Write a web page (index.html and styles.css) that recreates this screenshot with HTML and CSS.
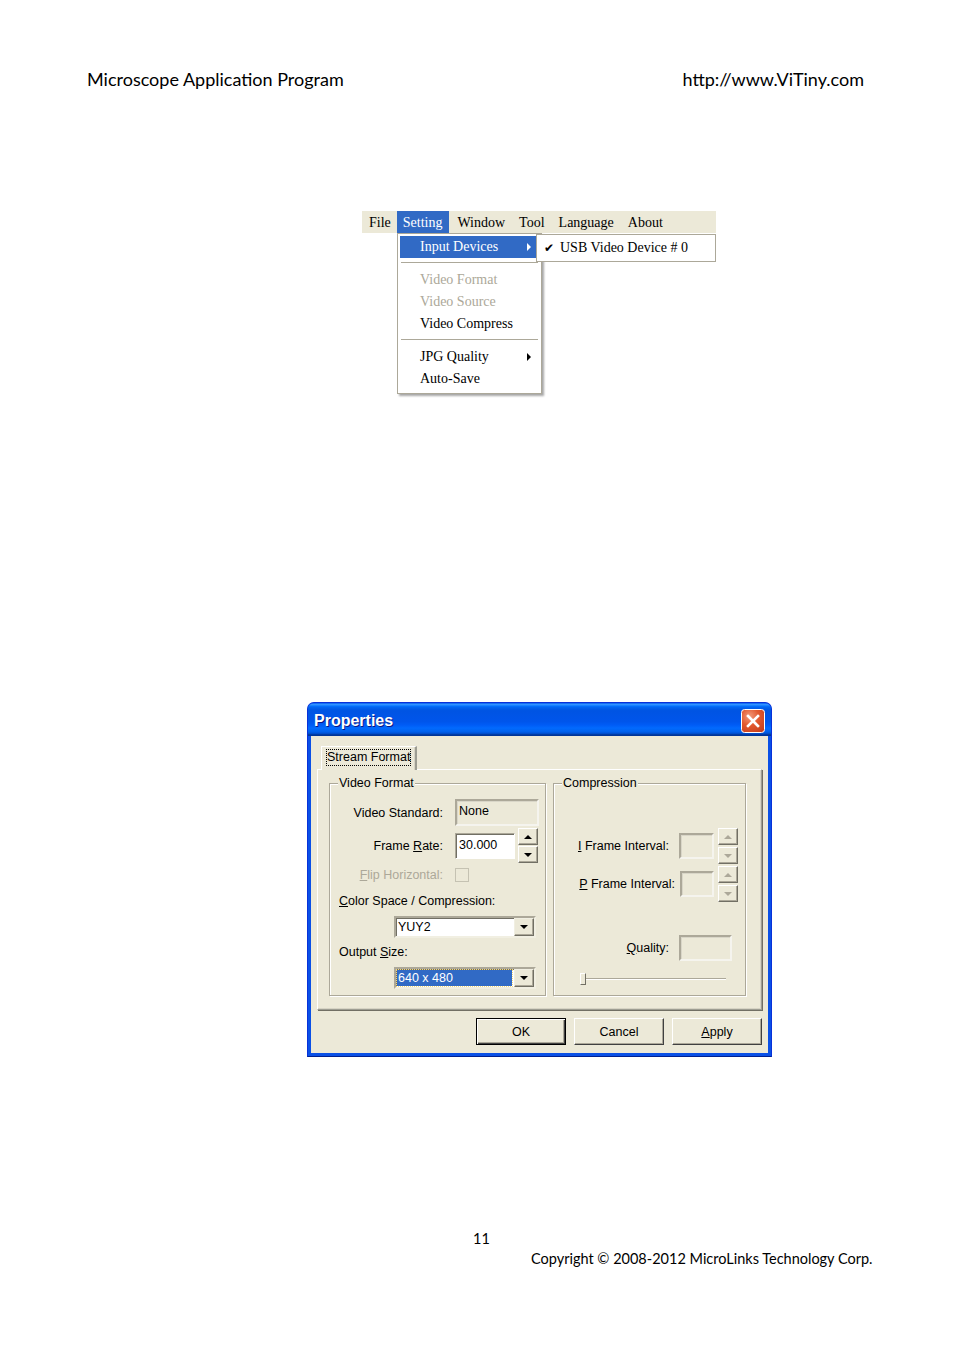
FILE: index.html
```html
<!DOCTYPE html>
<html>
<head>
<meta charset="utf-8">
<title>Microscope Application Program</title>
<link rel="stylesheet" href="styles.css">
</head>
<body>
<header class="doc-head">
  <span>Microscope Application Program</span>
  <span>http://www.ViTiny.com</span>
</header>

<div class="menu-shot">
  <div class="menubar">
    <span class="mb-item">File</span><span class="mb-item active">Setting</span><span class="mb-item">Window</span><span class="mb-item">Tool</span><span class="mb-item">Language</span><span class="mb-item">About</span>
  </div>
  <div class="menu-drops">
    <div class="dropdown">
      <div class="mi hl"><span>Input Devices</span><span class="arrow"></span></div>
      <div class="sep"></div>
      <div class="mi dis"><span>Video Format</span></div>
      <div class="mi dis"><span>Video Source</span></div>
      <div class="mi"><span>Video Compress</span></div>
      <div class="sep"></div>
      <div class="mi"><span>JPG Quality</span><span class="arrow dark"></span></div>
      <div class="mi"><span>Auto-Save</span></div>
    </div>
    <div class="submenu">
      <div class="smi"><span class="check">✔</span><span>USB Video Device # 0</span></div>
    </div>
  </div>
</div>

<div class="dialog">
  <div class="titlebar">
    <span class="title">Properties</span>
    <span class="close">
      <svg width="24" height="24" viewBox="0 0 24 24">
        <defs>
          <radialGradient id="cg" cx="0.35" cy="0.3" r="0.9">
            <stop offset="0" stop-color="#F29A7C"/>
            <stop offset="0.45" stop-color="#E2592F"/>
            <stop offset="1" stop-color="#C23A1A"/>
          </radialGradient>
        </defs>
        <rect x="0.5" y="0.5" width="23" height="23" rx="3" fill="url(#cg)" stroke="#ffffff"/>
        <path d="M7 7 L17 17 M17 7 L7 17" stroke="#ffffff" stroke-width="2.6" stroke-linecap="square"/>
      </svg>
    </span>
  </div>
  <div class="dlg-body">
    <div class="tabs"><div class="tab"><span class="focus">Stream Format</span></div></div>
    <div class="panel">
      <fieldset class="grp g-video">
        <legend>Video Format</legend>
        <div class="row r-std">
          <span class="lbl lbl-v">Video Standard:</span>
          <span class="field ro w84">None</span>
        </div>
        <div class="row r-rate">
          <span class="lbl lbl-v">Frame <u>R</u>ate:</span>
          <span class="field wh w60">30.000</span>
          <span class="spin s1"><span class="sb"><i class="tri up"></i></span><span class="sb"><i class="tri dn"></i></span></span>
        </div>
        <div class="row r-flip">
          <span class="lbl lbl-v dislbl"><u>F</u>lip Horizontal:</span>
          <span class="chk"></span>
        </div>
        <div class="line r-cs"><u>C</u>olor Space / Compression:</div>
        <div class="combo r-c1"><span class="cval">YUY2</span><span class="cbtn"><i class="tri dn"></i></span></div>
        <div class="line r-os">Output <u>S</u>ize:</div>
        <div class="combo r-c2"><span class="cval sel">640 x 480</span><span class="cbtn"><i class="tri dn"></i></span></div>
      </fieldset>
      <fieldset class="grp g-comp">
        <legend>Compression</legend>
        <div class="row r-if">
          <span class="lbl lbl-c"><u>I</u> Frame Interval:</span>
          <span class="field ro w35"></span>
          <span class="spin s2"><span class="sb"><i class="tri up off"></i></span><span class="sb"><i class="tri dn off"></i></span></span>
        </div>
        <div class="row r-pf">
          <span class="lbl lbl-p"><u>P</u> Frame Interval:</span>
          <span class="field ro w34"></span>
          <span class="spin s2"><span class="sb"><i class="tri up off"></i></span><span class="sb"><i class="tri dn off"></i></span></span>
        </div>
        <div class="row r-q">
          <span class="lbl lbl-c"><u>Q</u>uality:</span>
          <span class="field ro w53"></span>
        </div>
        <div class="slider"><span class="thumb"></span><span class="track"></span></div>
      </fieldset>
    </div>
    <div class="buttons">
      <span class="btn default">OK</span>
      <span class="btn">Cancel</span>
      <span class="btn"><u>A</u>pply</span>
    </div>
  </div>
</div>

<footer class="doc-foot">
  <div class="pnum">11</div>
  <div class="copy">Copyright © 2008-2012 MicroLinks Technology Corp.</div>
</footer>
</body>
</html>
```

FILE: styles.css
```css
html, body {
  margin: 0;
  padding: 0;
  background: #ffffff;
}

body {
  font-family: "Lato", "Open Sans", sans-serif;
  color: #000;
}

/* ---------- document header / footer ---------- */
.doc-head {
  display: flex;
  justify-content: space-between;
  padding: 69px 90px 0 87px;
  font-size: 18px;
  line-height: 20px;
}

.doc-foot {
  margin-top: 172px;
  font-size: 14.5px;
  line-height: 20px;
}
.pnum { margin-left: 473px; }
.copy { margin-left: 531px; }

/* ---------- menu screenshot ---------- */
.menu-shot {
  margin: 122px 0 0 362px;
  width: 354px;
  font-family: "Liberation Serif", "DejaVu Serif", serif;
  font-size: 14px;
}

.menubar {
  display: flex;
  height: 22px;
  line-height: 23px;
  background: #ECE9D8;
}
.mb-item {
  padding: 0 6px 0 8px;
}
.mb-item:first-child { padding: 0 6px 0 7px; }
.mb-item.active {
  background: #316AC5;
  color: #fff;
  padding: 0 7px 0 6px;
}

.menu-drops {
  display: flex;
  align-items: flex-start;
  margin-left: 35px;
}

.dropdown {
  width: 145px;
  box-sizing: border-box;
  background: #fff;
  border: 1px solid #ACA899;
  padding: 2px 2px 3px 2px;
  box-shadow: 2px 2px 2px rgba(0, 0, 0, 0.35);
}

.mi {
  display: flex;
  align-items: center;
  height: 22px;
  padding-left: 20px;
  white-space: nowrap;
}
.mi.hl {
  background: #316AC5;
  color: #fff;
}
.mi.dis { color: #ACA899; }

.arrow {
  margin-left: auto;
  margin-right: 8px;
  width: 0;
  height: 0;
  border-top: 4px solid transparent;
  border-bottom: 4px solid transparent;
  border-left: 4px solid #fff;
}
.arrow.dark { border-left-color: #000; }

.sep {
  margin: 4px 1px 5px 1px;
  border-top: 1px solid #ACA899;
  border-bottom: 1px solid #fff;
}

.submenu {
  position: relative;
  margin: 1px 0 0 -6px;
  width: 180px;
  box-sizing: border-box;
  background: #fff;
  border: 1px solid #ACA899;
  padding: 3px 2px;
}
.smi {
  display: flex;
  align-items: center;
  height: 20px;
  white-space: nowrap;
}
.check {
  width: 16px;
  margin-left: 5px;
  font-family: "DejaVu Sans", sans-serif;
  font-size: 12px;
}

/* ---------- properties dialog ---------- */
.dialog {
  margin: 308px 0 0 307px;
  width: 465px;
  box-sizing: border-box;
  background: #0A50E6;
  border: 1px solid #0831D9;
  border-bottom-color: #00208F;
  border-radius: 7px 7px 0 0;
  font-family: "Liberation Sans", Arial, sans-serif;
  font-size: 12.5px;
  color: #000;
}

.titlebar {
  display: flex;
  align-items: center;
  justify-content: space-between;
  height: 33px;
  padding: 0 6px 0 6px;
  border-radius: 6px 6px 0 0;
  background: linear-gradient(to bottom,
    #0058EE 0%, #3593FF 4%, #288EFF 6%, #127DFF 8%, #036FFC 10%,
    #0262EE 14%, #0057E5 20%, #0054E3 24%, #0055EB 56%, #005BF5 66%,
    #026AFE 76%, #0062EF 86%, #0052D6 92%, #0040AB 94%, #003092 100%);
}
.title {
  color: #fff;
  font-weight: bold;
  font-size: 16px;
  text-shadow: 1px 1px 0 #0A1883;
  padding-top: 3px;
}
.close {
  display: flex;
  margin-top: 2px;
}

.dlg-body {
  margin: 0 3px 3px 3px;
  background: #ECE9D8;
  padding: 10px 6px 8px 6px;
}

.tabs {
  display: flex;
  padding-left: 4px;
  height: 23px;
}
.tab {
  position: relative;
  z-index: 1;
  height: 24px;
  box-sizing: border-box;
  padding: 2px 4px 0 4px;
  background: #ECE9D8;
  border-left: 1px solid #fff;
  border-top: 1px solid #fff;
  border-right: 2px solid #9D9D92;
  box-shadow: inset -1px 0 0 #D6D3C4;
}
.focus {
  display: inline-block;
  padding: 0 1px;
  line-height: 17px;
  outline: 1px dotted #000;
  outline-offset: -1px;
}

.panel {
  height: 241px;
  box-sizing: border-box;
  border-left: 1px solid #fff;
  border-top: 1px solid #fff;
  border-right: 1px solid #9D9D92;
  border-bottom: 1px solid #9D9D92;
  box-shadow: 1px 1px 0 #716F64, inset -1px -1px 0 #D6D3C4;
  padding: 6px 14px 13px 11px;
  display: flex;
  gap: 7px;
}

.grp {
  margin: 0;
  padding: 0;
  min-width: 0;
  box-sizing: border-box;
  border: 1px solid #ACA899;
  box-shadow: inset 1px 1px 0 #fff, 1px 1px 0 #fff;
}
.grp legend {
  margin-left: 8px;
  padding: 0 1px;
  line-height: 15px;
  background: #ECE9D8;
}
.g-video { width: 217px; }
.g-comp { width: 193px; }

.row {
  display: flex;
  align-items: center;
}
.lbl {
  text-align: right;
  white-space: nowrap;
}
.lbl-v { width: 113px; margin-right: 12px; }
.lbl-c { width: 115px; margin-right: 10px; }
.lbl-p { width: 121px; margin-right: 5px; }
.dislbl { color: #ACA899; }

.field {
  box-sizing: border-box;
  height: 26px;
  line-height: 20px;
  padding-left: 2px;
  border: 2px solid;
  border-color: #ACA899 #F5F4EE #F5F4EE #ACA899;
  box-shadow: inset 1px 1px 0 #D9D6C8;
}
.field.ro { background: #ECE9D8; }
.field.wh {
  background: #fff;
  border-width: 1px;
  border-color: #ACA899 #fff #fff #ACA899;
  box-shadow: inset 1px 1px 0 #716F64;
  padding-left: 3px;
  line-height: 22px;
}
.w84 { width: 84px; height: 27px; }
.w60 { width: 60px; }
.w35 { width: 35px; }
.w34 { width: 34px; }
.w53 { width: 53px; }

.spin {
  display: flex;
  flex-direction: column;
  width: 20px;
  margin-left: 3px;
}
.s1 { gap: 1px; }
.s2 { gap: 2px; margin-left: 4px; }
.sb {
  height: 17px;
  box-sizing: border-box;
  display: flex;
  align-items: center;
  justify-content: center;
  background: #ECE9D8;
  border: 1px solid;
  border-color: #fff #716F64 #716F64 #fff;
  box-shadow: inset -1px -1px 0 #ACA899;
}

.tri {
  display: block;
  width: 0;
  height: 0;
  border-left: 4px solid transparent;
  border-right: 4px solid transparent;
}
.tri.up { border-bottom: 4px solid #000; }
.tri.dn { border-top: 4px solid #000; }
.tri.up.off { border-bottom-color: #ACA899; }
.tri.dn.off { border-top-color: #ACA899; }

.chk {
  width: 14px;
  height: 14px;
  box-sizing: border-box;
  border: 1px solid #C5C2B2;
  background: #ECE9D8;
}

.line {
  padding-left: 9px;
  white-space: nowrap;
}

.combo {
  display: flex;
  width: 142px;
  height: 22px;
  box-sizing: border-box;
  margin-left: 64px;
  background: #fff;
  border: 2px solid;
  border-color: #ACA899 #F1EFE2 #F1EFE2 #ACA899;
  box-shadow: inset 1px 1px 0 #716F64;
}
.cval {
  flex: 1;
  padding-left: 2px;
  line-height: 18px;
}
.cval.sel {
  margin: 1px 2px 1px 1px;
  padding-left: 1px;
  line-height: 16px;
  background: #316AC5;
  color: #fff;
  outline: 1px dotted #F5D97A;
}
.cbtn {
  width: 18px;
  display: flex;
  align-items: center;
  justify-content: center;
  background: #ECE9D8;
  border: 1px solid;
  border-color: #F1EFE2 #716F64 #716F64 #F1EFE2;
  box-shadow: inset -1px -1px 0 #ACA899;
}

/* vertical rhythm of video group */
.r-std { margin-top: 8px; }
.r-rate { margin-top: 2px; height: 35px; }
.r-flip { margin-top: 3px; height: 17px; }
.r-cs { margin-top: 9px; line-height: 18px; }
.r-c1 { margin-top: 6px; }
.r-os { margin-top: 6px; line-height: 17px; }
.r-c2 { margin-top: 6px; }

/* vertical rhythm of compression group */
.r-if { margin-top: 37px; height: 36px; }
.r-pf { margin-top: 2px; height: 36px; }
.r-q { margin-top: 33px; }

.slider {
  display: flex;
  align-items: center;
  height: 12px;
  width: 146px;
  margin: 12px 0 0 26px;
}
.thumb {
  width: 6px;
  height: 12px;
  box-sizing: border-box;
  background: #ECE9D8;
  border: 1px solid;
  border-color: #fff #716F64 #716F64 #fff;
}
.track {
  flex: 1;
  height: 0;
  border-top: 1px solid #ACA899;
  border-bottom: 1px solid #fff;
}

.buttons {
  display: flex;
  justify-content: flex-end;
  gap: 8px;
  margin-top: 8px;
}
.btn {
  width: 90px;
  height: 27px;
  box-sizing: border-box;
  display: flex;
  align-items: center;
  justify-content: center;
  background: #ECE9D8;
  border: 1px solid;
  border-color: #fff #404040 #404040 #fff;
  box-shadow: inset -1px -1px 0 #ACA899;
}
.btn.default {
  border: 1px solid #000;
  box-shadow: inset 1px 1px 0 #fff, inset -1px -1px 0 #404040, inset -2px -2px 0 #ACA899;
}
```
